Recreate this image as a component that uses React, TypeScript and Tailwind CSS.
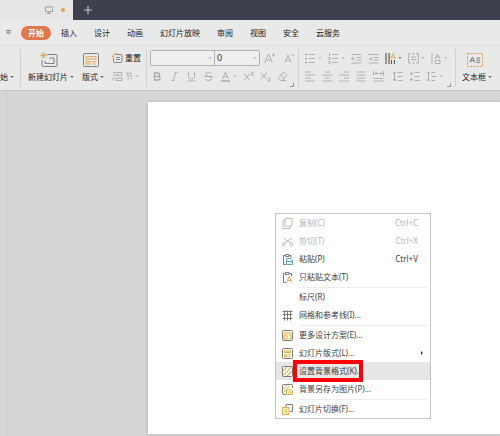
import React from "react";

type IconProps = { children: React.ReactNode; className?: string; box?: string };

const Icon = ({ children, className = "h-[11px] w-[11px]", box = "0 0 11 11" }: IconProps) => (
  <svg
    viewBox={box}
    className={`shrink-0 ${className}`}
    fill="none"
    stroke="currentColor"
    strokeWidth="0.9"
    aria-hidden="true"
  >
    {children}
  </svg>
);

const Caret = () => (
  <svg viewBox="0 0 4 4" className="h-1 w-1 shrink-0 opacity-70" aria-hidden="true">
    <path d="M0.4 1h3.2L2 3z" fill="currentColor" />
  </svg>
);

const Divider = () => <div className="my-[3px] w-px shrink-0 bg-[#d2d2d2]" />;

const Corner = () => (
  <Icon className="absolute right-1 bottom-[3px] h-1 w-1 text-[#8f8f8f]" box="0 0 4 4">
    <path d="M3.5 0v3.5H0" />
  </Icon>
);

const ToolButton = ({
  label,
  children,
  className = "text-[#a9a9a9]",
}: {
  label: string;
  children: React.ReactNode;
  className?: string;
}) => (
  <button
    type="button"
    aria-label={label}
    className={`flex h-3 shrink-0 items-center gap-[2px] ${className}`}
  >
    {children}
  </button>
);

const BigButton = ({ label, children }: { label: string; children?: React.ReactNode }) => (
  <button type="button" className="flex shrink-0 flex-col items-center gap-1 pt-[6px]">
    <span className="flex h-4 items-center pr-1">{children}</span>
    <span className="flex items-center gap-[2px] text-[8px] leading-[10px] whitespace-nowrap">
      {label}
      <Caret />
    </span>
  </button>
);

const tabs = ["开始", "插入", "设计", "动画", "幻灯片放映", "审阅", "视图", "安全", "云服务"];

const TitleBar = () => (
  <div className="flex h-5 bg-[#3d414d]">
    <div className="flex w-[73px] items-center justify-end gap-2 bg-[#e6e6e6] pr-2 text-[#9a9a9a]">
      <Icon className="h-2 w-2" box="0 0 8 8">
        <path d="M.5.9h7v4.7h-7zM4 5.6v1.7M2 7.4h4" />
      </Icon>
      <span className="h-1 w-1 rounded-full bg-[#e5a04e]" />
    </div>
    <button type="button" aria-label="新建标签" className="ml-[11px] text-[#d0d2d8]">
      <Icon className="h-2 w-2" box="0 0 8 8">
        <path d="M4 0v8M0 4h8" strokeWidth="1.1" />
      </Icon>
    </button>
  </div>
);

const TabRow = () => (
  <nav className="flex h-[25px] items-center bg-[#e9e9e9] pl-[6px]">
    <button type="button" aria-label="更多" className="mr-[10px] text-[#666]">
      <Icon className="h-[5px] w-[5px]" box="0 0 5 5">
        <path d="M0 .5h5M.7 2h3.6L2.5 4.2z" strokeWidth=".7" />
      </Icon>
    </button>
    <div className="flex gap-[3px]">
      {tabs.map((tab) => (
        <button
          key={tab}
          type="button"
          className={`h-[14px] shrink-0 rounded-full px-[7px] text-[8px] leading-[14px] ${
            tab === "开始" ? "bg-[#e2754a] font-bold text-white" : "text-[#222]"
          }`}
        >
          {tab}
        </button>
      ))}
    </div>
  </nav>
);

const SlideGroup = () => (
  <div className="flex shrink-0 pl-[7px]">
    <BigButton label="新建幻灯片">
      <Icon className="h-4 w-[18px]" box="0 0 18 16">
        <path d="M7 2.5h9q1 0 1 1v10q0 1-1 1H3q-1 0-1-1V8M9.5 6H14v5.5H5V9" stroke="#777" />
        <path d="M3.5 0v7M0 3.5h7M1 1l5 5M6 1L1 6" stroke="#dda24c" strokeWidth=".8" />
      </Icon>
    </BigButton>
    <div className="w-2" />
    <BigButton label="版式">
      <Icon className="h-4 w-4" box="0 0 16 16">
        <rect x=".5" y="1.5" width="15" height="13" rx="1" stroke="#777" />
        <path d="M3 4.5h10v2.5H3zM3 9.5h4v2.5H3zM9 9.5h4M9 12h4" stroke="#dda24c" />
      </Icon>
    </BigButton>
    <div className="ml-2 flex flex-col gap-2 pt-[7px] text-[8px] leading-[10px]">
      <button type="button" className="flex h-[10px] items-center gap-[2px]">
        <Icon>
          <path d="M3.5 1.5H9q1 0 1 1v6q0 1-1 1H2.5q-1 0-1-1V5M4 4.5h4M4 6.5h4" stroke="#777" />
          <path d="M5 .5H2.5Q.7 1.5.7 4M0 2.6l.8 1.600 1.5-1" stroke="#dda24c" />
        </Icon>
        重置
      </button>
      <button type="button" className="flex h-[10px] items-center gap-[2px] text-[#a9a9a9]">
        <Icon>
          <path d="M1 1.5h3M1 4h3M1 9.5V7h2M5 1.5h5v3H5zM4 7h6v2.5H4z" />
        </Icon>
        节
        <Caret />
      </button>
    </div>
  </div>
);

const FontGroup = () => (
  <div className="relative w-[151px] shrink-0 pt-1 pl-[3px]">
    <div className="flex items-center gap-1">
      <div className="flex h-4 w-[110px] shrink-0 rounded-[2px] border border-[#b2b2b2] bg-[#efefef] text-[#a9a9a9]">
        <label className="flex w-[64px] items-center border-r border-[#b2b2b2] pr-[2px]">
          <input aria-label="字体" className="w-full min-w-0 bg-transparent px-1 text-[8px] outline-none" />
          <Caret />
        </label>
        <label className="flex flex-1 items-center pr-[2px]">
          <input
            aria-label="字号"
            defaultValue="0"
            className="h-3 w-full min-w-0 bg-transparent px-[2px] text-[9px] leading-3 text-[#333] outline-none"
          />
          <Caret />
        </label>
      </div>
      <ToolButton label="增大字号">
        <Icon>
          <path d="M.5 10L4.500 1l4 9M2 7h5M8 2h3M9.500.5v3" />
        </Icon>
      </ToolButton>
      <div className="w-px" />
      <ToolButton label="减小字号">
        <Icon>
          <path d="M1 10l3-8 3 8M2 7.200h4M7.500 2h3" />
        </Icon>
      </ToolButton>
    </div>
    <div className="mt-1 flex gap-[6px] pl-[2px]">
      <ToolButton label="加粗">
        <Icon>
          <path d="M2.5 2v7H6q2 0 2-1.800T6 5.400H2.5H6q1.600 0 1.600-1.700T6 2z" strokeWidth="1.3" />
        </Icon>
      </ToolButton>
      <ToolButton label="倾斜">
        <Icon>
          <path d="M5.5 1.5h3M2.5 9.5h3M7 1.5l-3 8" />
        </Icon>
      </ToolButton>
      <ToolButton label="下划线">
        <Icon>
          <path d="M2.5 1v4.5q0 2.5 3 2.5t3-2.500V1M1.5 10h8" />
        </Icon>
      </ToolButton>
      <ToolButton label="删除线">
        <Icon>
          <path d="M8.5 3Q8 1.5 5.5 1.5 2.7 1.5 2.7 3.300T5.5 5.500q3 .3 3 2.200T5.5 9.500Q3 9.500 2.5 8M1 5.500h9" />
        </Icon>
      </ToolButton>
      <ToolButton label="字体颜色">
        <Icon>
          <path d="M2.5 8l3-7 3 7M3.500 5.800h4" />
          <path d="M1 10h9" strokeWidth="1.5" />
        </Icon>
        <Caret />
      </ToolButton>
      <ToolButton label="上标">
        <Icon>
          <path d="M.8 2.500l6 7M6.800 2.500l-6 7M8 1.500q1.500-1 2 0T8 4h2.500" />
        </Icon>
      </ToolButton>
      <ToolButton label="下标">
        <Icon>
          <path d="M.8 1.500l6 7M6.800 1.500l-6 7M8 7.500q1.500-1 2 0T8 10h2.500" />
        </Icon>
      </ToolButton>
      <ToolButton label="清除格式">
        <Icon>
          <path d="M1 6.500L6.500 1 10 4.500 5 9.500H3.500zM3.500 4l4 3.500M5 9.500h4" />
        </Icon>
      </ToolButton>
    </div>
    <Corner />
  </div>
);

const ParagraphGroup = () => (
  <div className="relative w-[156px] shrink-0 pt-[6px] pl-[6px]">
    <div className="flex gap-[6px]">
      <ToolButton label="项目符号">
        <Icon>
          <path d="M0 1.500h2M0 5.500h2M0 9.500h2" strokeWidth="1.500" />
          <path d="M3.500 1.500H10M3.500 5.500H10M3.500 9.500H10" />
        </Icon>
        <Caret />
      </ToolButton>
      <ToolButton label="编号">
        <Icon>
          <path d="M1.500 0v3M.5 4.500h1.500v2H.5M.5 8.500h1.500v2H.5M4 1.500h6M4 5.500h6M4 9.500h6" />
        </Icon>
        <Caret />
      </ToolButton>
      <ToolButton label="减少缩进">
        <Icon>
          <path d="M.5 1.500h10M5.500 4.500h5M5.500 7h5M.5 10h10M4 5.800H.5M2 4L.5 5.800 2 7.500" />
        </Icon>
      </ToolButton>
      <ToolButton label="增加缩进">
        <Icon>
          <path d="M.5 1.500h10M5.500 4.500h5M5.500 7h5M.5 10h10M.5 5.800H4M2.500 4L4 5.800 2.500 7.500" />
        </Icon>
      </ToolButton>
      <ToolButton label="文字方向" className="text-[#555]">
        <Icon>
          <path d="M1 0v11M4 0v11M6.500 7v4M9.500 7v4" strokeWidth="1.100" />
          <path d="M5.500 6L8 .5 10.500 6M6.300 4.200h3.400" stroke="#dda24c" />
        </Icon>
        <Caret />
      </ToolButton>
      <ToolButton label="对齐文本">
        <Icon>
          <path d="M3 .7H.7V10H3M8 .7h2.300V10H8M3 4h5M3 6.500h5M5.500 0v2M5.500 9v2" />
        </Icon>
        <Caret />
      </ToolButton>
      <ToolButton label="文字排列">
        <Icon>
          <path d="M1 0v11M4 6l2.500-5L9 6M5 4.200h3M4 7.500h5v3H4z" />
        </Icon>
        <Caret />
      </ToolButton>
    </div>
    <div className="mt-[6px] flex gap-[6px]">
      <ToolButton label="左对齐">
        <Icon>
          <path d="M0 1h6M0 4h10M0 7h6M0 10h10" />
        </Icon>
      </ToolButton>
      <ToolButton label="居中">
        <Icon>
          <path d="M3 1h5M.5 4h10M3 7h5M.5 10h10" />
        </Icon>
      </ToolButton>
      <ToolButton label="右对齐">
        <Icon>
          <path d="M5 1h5M0 4h10M5 7h5M0 10h10" />
        </Icon>
      </ToolButton>
      <ToolButton label="两端对齐">
        <Icon>
          <path d="M.5 1h9M.5 4h9M.5 7h9M.5 10h9" />
        </Icon>
      </ToolButton>
      <ToolButton label="分散对齐">
        <Icon>
          <path d="M.5 0v5M10.500 0v5M2 2.500h3M6 2.500h3M3.500 1L2 2.500 3.500 4M7.500 1L9 2.500 7.500 4M.5 7.500h10M.5 10h10" />
        </Icon>
      </ToolButton>
      <div className="ml-[2px] flex gap-[6px]">
        <ToolButton label="行距">
          <Icon>
            <path d="M2.500 1v9M1 3l1.500-2L4 3M1 8l1.500 2L4 8M5.500 1.500h5M5.500 5.500h5M5.500 9.500h5" />
          </Icon>
        </ToolButton>
        <ToolButton label="段前间距">
          <Icon>
            <path d="M2.500 1v3M1 2.500h3M2.500 7v3M1 8.500h3M5.500 1.500h5M5.500 5.500h5M5.500 9.500h5" />
          </Icon>
        </ToolButton>
        <ToolButton label="段后间距">
          <Icon>
            <path d="M2.500 1v9M1 2.500L2.500 1 4 2.500M1 8.500L2.500 10 4 8.500M5.500 1.500H9M5.500 5.500h5M5.500 9.500H9" />
          </Icon>
          <Caret />
        </ToolButton>
      </div>
    </div>
    <Corner />
  </div>
);

const Ribbon = () => (
  <div className="flex h-[46px] overflow-hidden border-y border-t-[#dedede] border-b-[#c6c6c6] bg-[#e9e9e9] text-[#222]">
    <div className="w-5 shrink-0">
      <BigButton label="始" />
    </div>
    <Divider />
    <SlideGroup />
    <div className="w-[5px] shrink-0" />
    <Divider />
    <FontGroup />
    <Divider />
    <ParagraphGroup />
    <Divider />
    <div className="flex pl-[6px]">
      <BigButton label="文本框">
        <Icon className="h-4 w-4" box="0 0 16 16">
          <rect x=".5" y="1.5" width="15" height="13" stroke="#d39a45" strokeDasharray="2 1.2" />
          <path d="M3 10.500L5.500 5 8 10.500M4 8.700h3M9.500 6H13M9.500 8.200H13M9.500 10.400H13" stroke="#666" />
        </Icon>
      </BigButton>
    </div>
  </div>
);

// context menu drawings
const yellow = "#d9a441";

const menuIcons: Record<string, React.ReactNode> = {
  copy: <path d="M3 .5h7v7.500H3zM3 2.500H1v8h7V8" />,
  cut: (
    <path d="M1 2l7.500 5M10 2L2.500 7M3 8.300a1.300 1.300 0 1 1-2.500 0 1.300 1.300 0 1 1 2.500 0M10.500 8.300a1.300 1.300 0 1 1-2.500 0 1.300 1.300 0 1 1 2.500 0" />
  ),
  paste: (
    <>
      <path d="M3.500 1.500h-2v9H4M7 1.500h2V4M3.500.5H7v2H3.500z" />
      <path d="M4.500 4.500h4l2 2v4h-6zM4.500 7.500h6" stroke="#5f9bb2" fill="#e5f5fa" />
    </>
  ),
  text: (
    <>
      <path d="M3.500 1.500h-2v9H4M7 1.500h2.500V4M3.500.5H7v2H3.500z" />
      <path d="M4.500 10.500l2.700-6 2.800 6M5.500 8.500h3.500" stroke={yellow} />
    </>
  ),
  grid: <path d="M2.500.5v10M5.500.5v10M8.500.5v10M.5 1.500h10M.5 4.500h10M.5 8.500h10" />,
  design: (
    <>
      <rect x=".5" y=".5" width="10" height="10" rx="1" fill="#fff9dd" />
      <path d="M2 3h7M2 5h3v4H2zM7 5h2v4H7" stroke={yellow} />
    </>
  ),
  layout: (
    <>
      <rect x=".5" y=".5" width="10" height="10" rx="1" fill="#fff9dd" />
      <path d="M2.500 3h6v1.500h-6zM2.500 7H5v1.500H2.500zM6.500 6.800h2M6.500 8.700h2" stroke={yellow} />
    </>
  ),
  background: (
    <>
      <rect x=".5" y=".5" width="10" height="10" rx="1" fill="#fff4df" />
      <path d="M1 5l4-4M1 9.500L9.500 1M5 10l5-5" stroke="#c98b50" />
    </>
  ),
  picture: (
    <>
      <path d="M4 10.500H1.500q-1 0-1-1v-8q0-1 1-1h8q1 0 1 1V4" fill="#fff9dd" />
      <path d="M1.500 5l3.500-3.500M1.500 8.500l6-6" stroke={yellow} />
      <path d="M4.500 10.500V7q3-3 6 0v3.500zM6 9l1.500-1.500L9.500 9" stroke={yellow} fill="#fff9dd" />
    </>
  ),
  transition: (
    <>
      <path d="M4 3V.5h6.500v7H8" />
      <path d="M.5 3.500H7v7H.5zM3 5.500l1-.5v4" stroke={yellow} fill="#fff3bd" />
    </>
  ),
};

type MenuEntry = {
  label: string;
  icon?: string;
  shortcut?: string;
  disabled?: boolean;
  submenu?: boolean;
  active?: boolean;
};

const menuSections: MenuEntry[][] = [
  [
    { label: "复制(C)", icon: "copy", shortcut: "Ctrl+C", disabled: true },
    { label: "剪切(T)", icon: "cut", shortcut: "Ctrl+X", disabled: true },
    { label: "粘贴(P)", icon: "paste", shortcut: "Ctrl+V" },
    { label: "只粘贴文本(T)", icon: "text" },
  ],
  [{ label: "标尺(R)" }, { label: "网格和参考线(I)...", icon: "grid" }],
  [
    { label: "更多设计方案(E)...", icon: "design" },
    { label: "幻灯片版式(L)...", icon: "layout", submenu: true },
    { label: "设置背景格式(K)...", icon: "background", active: true },
    { label: "背景另存为图片(P)...", icon: "picture" },
  ],
  [{ label: "幻灯片切换(F)...", icon: "transition" }],
];

const MenuItem = ({ item }: { item: MenuEntry }) => (
  <button
    type="button"
    disabled={item.disabled}
    className={`relative flex h-[18px] w-full items-center px-[6px] text-left text-[8px] ${
      item.disabled ? "text-[#b5b5b5]" : "text-[#3c3c3c]"
    } ${item.active ? "bg-[#e6e6e6]" : ""}`}
  >
    <span className={`mr-[6px] w-[11px] ${item.disabled ? "" : "text-[#6e6e6e]"}`}>
      {item.icon && <Icon>{menuIcons[item.icon]}</Icon>}
    </span>
    <span className="flex-1 whitespace-nowrap">{item.label}</span>
    {item.shortcut && <span className="mr-[6px]">{item.shortcut}</span>}
    {item.submenu && (
      <Icon className="h-1 w-1" box="0 0 4 4">
        <path d="M1 0l2 2-2 2z" fill="currentColor" stroke="none" />
      </Icon>
    )}
    {item.active && (
      <span className="absolute -top-[2px] left-[17px] h-[22px] w-[70px] border-4 border-[#fb0007]" />
    )}
  </button>
);

const ContextMenu = () => (
  <div className="absolute top-[111px] left-[127px] w-[156px] border border-[#c4c4c4] bg-white">
    {menuSections.map((section, i) => (
      <div key={i}>
        {i > 0 && <div className="mr-[3px] ml-[23px] h-[2px] border-b border-[#ececec]" />}
        {section.map((item) => (
          <MenuItem key={item.label} item={item} />
        ))}
      </div>
    ))}
  </div>
);

const App = () => (
  <div className="flex min-h-screen flex-col overflow-hidden bg-[#d6d6d6] font-['Noto_Sans','Noto_Sans_CJK_SC',sans-serif]">
    <TitleBar />
    <TabRow />
    <Ribbon />
    <main className="flex flex-1">
      <div className="w-[7px] shrink-0 border-r border-[#cbcbcb]" />
      <div className="flex flex-1 pt-[11px] pb-[2px] pl-[141px]">
        <div className="relative flex-1 bg-white shadow-[0_0_3px_#aaa]">
          <ContextMenu />
        </div>
      </div>
    </main>
  </div>
);

export default App;
